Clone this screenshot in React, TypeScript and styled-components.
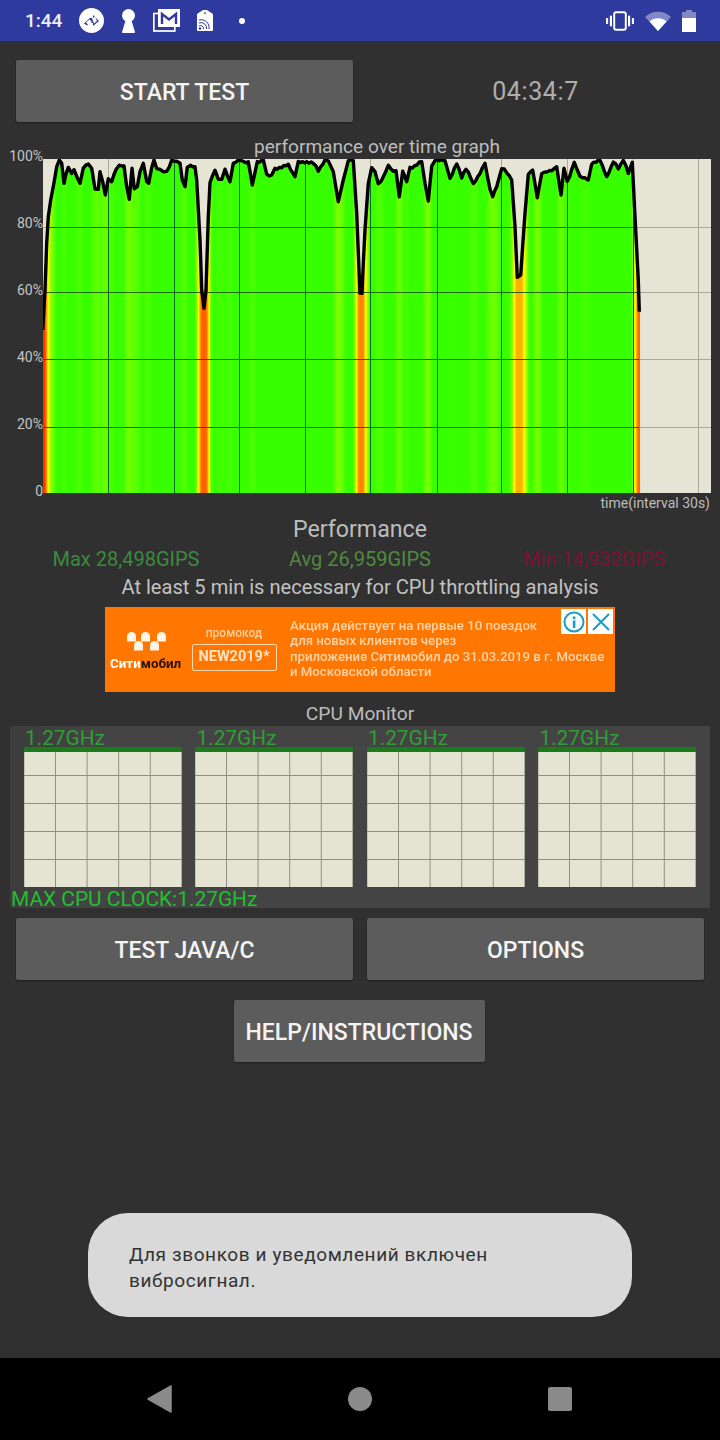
import React from "react";
import styled, { createGlobalStyle } from "styled-components";

const Global = createGlobalStyle`
  html, body { margin: 0; padding: 0; background: #303030; }
  body { font-family: Roboto, "Noto Sans", sans-serif; overflow: hidden; }
`;

const Page = styled.div`
  position: relative;
  width: 720px;
  height: 1440px;
  display: flex;
  flex-direction: column;
  background: #303030;
  overflow: hidden;
`;

const StatusBar = styled.header`
  flex: none;
  height: 41px;
  background: #2f3a9e;
  display: flex;
  align-items: center;
  padding: 0 24px 0 25px;
  color: #eceef8;
  box-sizing: border-box;
`;
const Clock = styled.span`
  font-size: 19px;
  font-weight: 500;
  width: 54px;
`;
const NoticeIcons = styled.div`
  display: flex;
  align-items: center;
  gap: 17px;
  flex: 1;
`;
const SystemIcons = styled.div`
  display: flex;
  align-items: center;
  gap: 11px;
`;

const Main = styled.main`
  flex: 1;
  display: flex;
  flex-direction: column;
  min-height: 0;
`;

const TopRow = styled.div`
  display: grid;
  grid-template-columns: 337px 337px;
  column-gap: 14px;
  padding: 19px 16px 0;
  align-items: center;
`;
const Button = styled.button<{ $wide?: boolean }>`
  height: 62px;
  width: ${(p) => (p.$wide ? "251px" : "337px")};
  border: 0;
  padding: 2px 0 0;
  border-radius: 2px;
  background: #5c5c5c;
  color: #f4f4f4;
  font: 500 23px Roboto, sans-serif;
  box-shadow: 0 1px 2px rgba(0, 0, 0, 0.4);
`;
const Timer = styled.div`
  text-align: center;
  font-size: 25px;
  color: #aeaeae;
  letter-spacing: 0.6px;
  padding-top: 1px;
`;

const GraphTitle = styled.div`
  margin-top: 12px;
  height: 25px;
  line-height: 25px;
  padding-left: 34px;
  text-align: center;
  font-size: 19.1px;
  color: #bdbdbd;
`;
const GraphRow = styled.div`
  display: flex;
  align-items: flex-start;
  height: 334px;
`;
const Axis = styled.div`
  width: 43px;
  height: 351px;
  margin-top: -11px;
  display: flex;
  flex-direction: column;
  justify-content: space-between;
  align-items: flex-end;
  font-size: 14px;
  line-height: 16px;
  color: #c4c4c4;
`;
const GraphSvg = styled.svg`
  display: block;
  width: 668px;
  height: 334px;
`;
const TimeCaption = styled.div`
  text-align: right;
  padding-right: 10px;
  font-size: 14px;
  line-height: 20px;
  color: #bcbcbc;
`;
const SectionTitle = styled.div`
  margin-top: 2px;
  text-align: center;
  font-size: 23.2px;
  line-height: 28px;
  color: #bcbcbc;
`;
const Stats = styled.div`
  display: grid;
  grid-template-columns: 234px 234px 234px;
  padding-left: 9px;
  height: 28px;
  margin-top: 2px;
  align-items: center;
`;
const Stat = styled.div<{ $color: string }>`
  text-align: center;
  font-size: 20px;
  color: ${(p) => p.$color};
`;
const Notice = styled.div`
  text-align: center;
  font-size: 20.1px;
  line-height: 28px;
  color: #c2c2c2;
`;

const Ad = styled.aside`
  position: relative;
  align-self: center;
  width: 510px;
  height: 85px;
  margin-top: 6px;
  background: #ff7600;
  display: flex;
  box-sizing: border-box;
  padding-left: 5px;
`;
const AdLogo = styled.div`
  width: 68px;
  display: flex;
  flex-direction: column;
  align-items: flex-start;
  padding-top: 25px;
  filter: blur(0.5px);
`;
const LogoText = styled.div`
  margin-top: 5px;
  font-size: 13.4px;
  font-weight: 700;
  color: #fff;
  white-space: nowrap;
  b { color: #2a1200; font-weight: 700; }
`;
const AdPromo = styled.div`
  width: 112px;
  display: flex;
  flex-direction: column;
  align-items: center;
  padding-top: 19px;
  filter: blur(0.5px);
`;
const PromoLabel = styled.div`
  font-size: 12px;
  font-weight: 500;
  line-height: 15px;
  color: #ffcf9c;
`;
const PromoCode = styled.div`
  margin-top: 3px;
  width: 85px;
  height: 27px;
  box-sizing: border-box;
  border: 1.5px solid #ffd9b0;
  border-radius: 2px;
  text-align: center;
  font-size: 14.5px;
  font-weight: 700;
  line-height: 24px;
  color: #ffe3c6;
`;
const AdText = styled.div`
  padding-top: 11px;
  font-size: 13.2px;
  font-weight: 500;
  line-height: 15.4px;
  color: #ffd3a6;
  white-space: nowrap;
  filter: blur(0.6px);
`;
const AdBadges = styled.div`
  position: absolute;
  top: 2px;
  right: 2px;
  display: flex;
  gap: 2px;
`;
const AdBadge = styled.div`
  width: 25px;
  height: 25px;
  background: #fdfdfd;
  display: flex;
  align-items: center;
  justify-content: center;
`;

const CpuTitle = styled.div`
  margin-top: 9px;
  height: 25px;
  line-height: 25px;
  text-align: center;
  font-size: 19.2px;
  color: #bcbcbc;
`;
const CpuPanel = styled.section`
  margin: 0 10px;
  height: 182px;
  box-sizing: border-box;
  padding-left: 14px;
  background: linear-gradient(90deg, #3c3c3c 0, #444 12%, #444 100%);
`;
const CpuGrid = styled.div`
  display: grid;
  grid-template-columns: repeat(4, 157.7px);
  column-gap: 13.8px;
`;
const CpuCell = styled.div`
  display: flex;
  flex-direction: column;
`;
const CpuFreq = styled.div`
  height: 21px;
  line-height: 24px;
  padding-left: 1px;
  font-size: 20.8px;
  color: #2f9e35;
  white-space: nowrap;
`;
const CpuBar = styled.div`
  height: 5px;
  background: #1a7a1c;
`;
const CpuGraph = styled.div`
  height: 135px;
  background-color: #e5e4d3;
  background-image:
    linear-gradient(90deg, #8f8f83 1px, transparent 1px),
    linear-gradient(180deg, #8f8f83 1px, transparent 1px);
  background-size: 31.6px 28px;
  background-position: 31px 23px;
`;
const MaxClock = styled.div`
  margin-left: -13px;
  height: 21px;
  line-height: 24px;
  font-size: 20.9px;
  color: #22bf2e;
`;

const ButtonRow = styled.div`
  display: grid;
  grid-template-columns: 337px 337px;
  column-gap: 14px;
  padding: 10px 16px 0;
`;
const HelpRow = styled.div`
  display: flex;
  justify-content: center;
  padding: 20px 2px 0 0;
`;

const Toast = styled.div`
  position: absolute;
  left: 88px;
  top: 1213px;
  width: 544px;
  height: 104px;
  box-sizing: border-box;
  padding: 29px 41px 0;
  border-radius: 40px;
  background: #d9d9d9;
  color: #333;
  font-size: 19px;
  line-height: 26px;
  letter-spacing: 0.6px;
`;

const NavBar = styled.nav`
  flex: none;
  height: 82px;
  background: #000;
  display: flex;
  align-items: center;
  justify-content: center;
  gap: 176px;
  padding-right: 3px;
`;

const L = [[128,600],[130,570],[135,480],[140,340],[145,260],[152,210],[160,170],[170,110],[178,90],[185,100],[192,160],[197,135],[205,115],[215,130],[222,122],[232,145],[240,160],[250,115],[265,100],[275,115],[285,178],[295,178],[300,125],[308,155],[316,195],[325,145],[335,155],[348,115],[358,107],[372,108],[380,170],[388,208],[396,115],[403,175],[412,170],[420,125],[430,100],[440,155],[446,160],[455,110],[462,90],[470,115],[480,118],[490,125],[500,125],[515,92],[530,95],[540,100],[547,150],[555,170],[562,110],[572,105],[585,110],[590,150],[600,330],[605,480],[612,535],[618,480],[625,260],[630,155],[645,120],[655,145],[665,150],[675,120],[690,155],[700,100],[715,90],[730,95],[745,95],[757,165],[772,95],[790,90],[800,135],[815,135],[825,115],[845,112],[865,105],[885,140],[895,95],[920,95],[940,100],[955,120],[975,92],[985,92],[1000,125],[1015,215],[1030,150],[1045,92],[1060,92],[1070,250],[1078,440]];
const R = [[0,490],[6,490],[10,400],[15,300],[25,160],[35,110],[45,125],[55,165],[70,140],[85,108],[100,122],[108,122],[118,200],[128,120],[140,155],[150,115],[185,95],[195,160],[205,213],[215,110],[225,92],[255,92],[270,145],[290,102],[305,140],[318,115],[340,160],[360,130],[375,100],[390,180],[398,198],[410,170],[425,115],[440,125],[455,150],[465,290],[472,445],[482,435],[495,250],[505,130],[518,120],[532,203],[545,130],[575,120],[590,110],[603,195],[612,115],[622,155],[643,97],[660,140],[685,150],[695,100],[720,92],[740,140],[760,95],[775,115],[790,90],[805,128],[817,97],[825,260],[835,450],[838,545]];

const W = 668;
const H = 334;
const rough: [number, number][] = [
  ...L.map(([x, y]) => [x / 3 - 43, y / 3 + 130 - 159] as [number, number]),
  ...R.map(([x, y]) => [x / 3 + 360 - 43, y / 3 + 130 - 159] as [number, number]),
];
const roughY = (x: number) => {
  for (let i = 1; i < rough.length; i++) {
    if (x <= rough[i][0]) {
      const [x0, y0] = rough[i - 1];
      const [x1, y1] = rough[i];
      return y0 + ((y1 - y0) * (x - x0)) / Math.max(x1 - x0, 0.001);
    }
  }
  return rough[rough.length - 1][1];
};
const curve: [number, number][] = [];
for (let i = 0; i < rough.length - 1; i++) {
  const [x0, y0] = rough[i];
  const [x1, y1] = rough[i + 1];
  const steps = Math.max(1, Math.floor((x1 - x0) / 2));
  for (let s = 0; s < steps; s++) {
    const x = x0 + ((x1 - x0) * s) / steps;
    const y = y0 + ((y1 - y0) * s) / steps;
    const n = Math.abs(y1 - y0) / Math.max(x1 - x0, 0.1) < 3 ? Math.sin(x * 2.3) * Math.cos(x * 0.9) * 1.3 : 0;
    curve.push([x, Math.max(0.5, y + n)]);
  }
}
curve.push(rough[rough.length - 1]);

const heatHue = (v: number) => {
  if (v <= 50) return 8;
  if (v <= 63) return 8 + ((v - 50) / 13) * 30;
  if (v <= 85) return 38 + ((v - 63) / 22) * 47;
  if (v <= 95) return 85 + ((v - 85) / 10) * 22;
  return 107;
};
const valueAt = (x: number) => 100 - (roughY(Math.max(0.2, Math.min(596, x))) / H) * 100;
const minValue = (x: number) => Math.min(valueAt(x - 1.5), valueAt(x), valueAt(x + 1.5));
const columns = Array.from({ length: 597 }, (_, x) => {
  const px = x + 0.5;
  const v = (minValue(px - 1) + minValue(px) + minValue(px + 1)) / 3;
  return { x, y: roughY(px), hue: heatHue(v) };
});
const vLines = [65, 131, 196, 262, 327, 394, 458, 524, 590, 655];
const hLines = [68, 133, 200, 268];
const linePath = "M" + curve.map(([x, y]) => `${x.toFixed(1)} ${y.toFixed(1)}`).join("L");
const areaPath = `${linePath}L${curve[curve.length - 1][0]} ${H}L0 ${H}Z`;

const PerfGraph = () => (
  <GraphSvg viewBox={`0 0 ${W} ${H}`}>
    <defs>
      <clipPath id="underCurve">
        <path d={areaPath} />
      </clipPath>
    </defs>
    <rect width={W} height={H} fill="#e5e4d5" />
    {vLines.map((x) => (
      <rect key={x} x={x} y={0} width={1} height={H} fill="#a9a998" />
    ))}
    {hLines.map((y) => (
      <rect key={y} x={0} y={y} width={W} height={1} fill="#a9a998" />
    ))}
    {columns.map((c) => (
      <rect key={c.x} x={c.x} y={c.y} width={1.05} height={H - c.y} fill={`hsl(${c.hue},100%,50%)`} />
    ))}
    <g clipPath="url(#underCurve)">
      {vLines.map((x) => (
        <rect key={x} x={x} y={0} width={1} height={H} fill="rgb(0,110,35)" />
      ))}
      {hLines.map((y) => (
        <rect key={y} x={0} y={y} width={W} height={1} fill="rgb(30,105,10)" />
      ))}
    </g>
    <path d={linePath} fill="none" stroke="#000" strokeWidth={3.4} strokeLinejoin="round" />
  </GraphSvg>
);

const TagIcon = () => (
  <svg width="25" height="25" viewBox="0 0 25 25">
    <circle cx="12.5" cy="12.5" r="12.5" fill="#fff" />
    <path d="M5 15.5 L11 10 L14 10 L14 7 L20 13 L14 18 L14 15 L10 15 L8 17.5 Z" fill="#2f3a9e" />
    <path d="M7 14.5 L10.5 11.5 L13 14 L9.5 17 Z M13 10.5 L16 8.7 L18 13 L15 15.5 Z" fill="#fff" />
  </svg>
);
const KeyholeIcon = () => (
  <svg width="15" height="24" viewBox="0 0 15 24">
    <circle cx="7.5" cy="6.5" r="6.5" fill="#fff" />
    <path d="M5 10 H10 L14 23 Q14 24 13 24 H2 Q1 24 1 23 Z" fill="#fff" />
  </svg>
);
const MailIcon = () => (
  <svg width="27" height="23" viewBox="0 0 27 23">
    <rect x="0.8" y="4.5" width="21" height="17.5" fill="none" stroke="#fff" strokeWidth="1.7" />
    <rect x="5" y="0" width="22" height="18" fill="#fff" />
    <path d="M9 15 V5 L16 10.5 L23 5 V15" fill="none" stroke="#2f3a9e" strokeWidth="2.4" />
  </svg>
);
const SimIcon = () => (
  <svg width="16" height="21" viewBox="0 0 16 21">
    <path d="M0 4 L6 0 H10 L16 4 V20 Q16 21 15 21 H1 Q0 21 0 20 Z" fill="#fff" />
    <g fill="none" stroke="#2f3a9e" strokeWidth="1">
      <path d="M2 10 A8 8 0 0 1 12 19" />
      <path d="M2 13 A5.5 5.5 0 0 1 9.5 19" />
      <path d="M2 16 A3 3 0 0 1 6.5 19" />
    </g>
    <circle cx="3" cy="18.5" r="1.2" fill="#2f3a9e" />
    <circle cx="8" cy="3.2" r="0.9" fill="#2f3a9e" />
  </svg>
);
const DotIcon = () => (
  <svg width="6" height="6" viewBox="0 0 6 6" style={{ marginLeft: 9 }}>
    <circle cx="3" cy="3" r="3" fill="#fff" />
  </svg>
);
const VibrateIcon = () => (
  <svg width="28" height="20" viewBox="0 0 29 20">
    <rect x="8.5" y="1" width="12" height="18" rx="2" fill="none" stroke="#fff" strokeWidth="2" />
    <rect x="4" y="4.5" width="2.2" height="11" fill="#fff" />
    <rect x="22.8" y="4.5" width="2.2" height="11" fill="#fff" />
    <rect x="0" y="7" width="2.2" height="6" fill="#fff" />
    <rect x="26.8" y="7" width="2.2" height="6" fill="#fff" />
  </svg>
);
const WifiIcon = () => (
  <svg width="26" height="20" viewBox="0 0 26 20">
    <path d="M0 6 A19 19 0 0 1 26 6 L13 20 Z" fill="#fff" opacity="0.4" />
    <path d="M4.5 10.5 A13 13 0 0 1 21.5 10.5 L13 20 Z" fill="#fff" />
  </svg>
);
const BatteryIcon = () => (
  <svg width="14" height="22" viewBox="0 0 14 22">
    <path d="M4 0 H10 V2 H14 V22 H0 V2 H4 Z" fill="#fff" opacity="0.4" />
    <rect x="0" y="8" width="14" height="14" fill="#fff" />
  </svg>
);
const TaxiLogo = () => (
  <svg width="39" height="19" viewBox="0 0 39 19" style={{ marginLeft: 17 }}>
    {[[0, 0], [14, 0], [30, 0], [7, 9], [23, 9]].map(([x, y]) => (
      <path key={`${x}-${y}`} d={`M${x} ${y + 4.5} A4.5 4.5 0 0 1 ${x + 9} ${y + 4.5} V${y + 9.5} H${x} Z`} fill="#fff4e6" />
    ))}
  </svg>
);
const InfoIcon = () => (
  <svg width="22" height="22" viewBox="0 0 22 22">
    <circle cx="11" cy="11" r="9.5" fill="none" stroke="#1a9cc4" strokeWidth="2" />
    <rect x="9.8" y="9.5" width="2.6" height="7.5" fill="#1a9cc4" />
    <rect x="9.8" y="5.5" width="2.6" height="2.6" fill="#1a9cc4" />
  </svg>
);
const CloseIcon = () => (
  <svg width="20" height="20" viewBox="0 0 20 20">
    <path d="M2 2 L18 18 M18 2 L2 18" stroke="#1a9cc4" strokeWidth="2" />
  </svg>
);

const NavBack = () => (
  <svg width="26" height="28" viewBox="0 0 26 28">
    <path d="M25 1 V27 L2 14 Z" fill="#8a8a8a" stroke="#8a8a8a" strokeWidth="1.5" strokeLinejoin="round" />
  </svg>
);
const NavHome = () => (
  <svg width="24" height="24" viewBox="0 0 24 24">
    <circle cx="12" cy="12" r="12" fill="#8a8a8a" />
  </svg>
);
const NavRecent = () => (
  <svg width="24" height="24" viewBox="0 0 24 24">
    <rect width="24" height="24" rx="2" fill="#8a8a8a" />
  </svg>
);

export default function App() {
  return (
    <Page>
      <Global />
      <StatusBar>
        <Clock>1:44</Clock>
        <NoticeIcons>
          <TagIcon />
          <KeyholeIcon />
          <MailIcon />
          <SimIcon />
          <DotIcon />
        </NoticeIcons>
        <SystemIcons>
          <VibrateIcon />
          <WifiIcon />
          <BatteryIcon />
        </SystemIcons>
      </StatusBar>
      <Main>
        <TopRow>
          <Button>START TEST</Button>
          <Timer>04:34:7</Timer>
        </TopRow>
        <GraphTitle>performance over time graph</GraphTitle>
        <GraphRow>
          <Axis>
            <span>100%</span>
            <span>80%</span>
            <span>60%</span>
            <span>40%</span>
            <span>20%</span>
            <span>0</span>
          </Axis>
          <PerfGraph />
        </GraphRow>
        <TimeCaption>time(interval 30s)</TimeCaption>
        <SectionTitle>Performance</SectionTitle>
        <Stats>
          <Stat $color="#3b8a3f">Max 28,498GIPS</Stat>
          <Stat $color="#4f8a3f">Avg 26,959GIPS</Stat>
          <Stat $color="#7a1233">Min 14,932GIPS</Stat>
        </Stats>
        <Notice>At least 5 min is necessary for CPU throttling analysis</Notice>
        <Ad>
          <AdLogo>
            <TaxiLogo />
            <LogoText>
              Сити<b>мобил</b>
            </LogoText>
          </AdLogo>
          <AdPromo>
            <PromoLabel>промокод</PromoLabel>
            <PromoCode>NEW2019*</PromoCode>
          </AdPromo>
          <AdText>
            Акция действует на первые 10 поездок
            <br />
            для новых клиентов через
            <br />
            приложение Ситимобил до 31.03.2019 в г. Москве
            <br />
            и Московской области
          </AdText>
          <AdBadges>
            <AdBadge>
              <InfoIcon />
            </AdBadge>
            <AdBadge>
              <CloseIcon />
            </AdBadge>
          </AdBadges>
        </Ad>
        <CpuTitle>CPU Monitor</CpuTitle>
        <CpuPanel>
          <CpuGrid>
            {[0, 1, 2, 3].map((i) => (
              <CpuCell key={i}>
                <CpuFreq>1.27GHz</CpuFreq>
                <CpuBar />
                <CpuGraph />
              </CpuCell>
            ))}
          </CpuGrid>
          <MaxClock>MAX CPU CLOCK:1.27GHz</MaxClock>
        </CpuPanel>
        <ButtonRow>
          <Button>TEST JAVA/C</Button>
          <Button>OPTIONS</Button>
        </ButtonRow>
        <HelpRow>
          <Button $wide>HELP/INSTRUCTIONS</Button>
        </HelpRow>
      </Main>
      <Toast>
        Для звонков и уведомлений включен
        <br />
        вибросигнал.
      </Toast>
      <NavBar>
        <NavBack />
        <NavHome />
        <NavRecent />
      </NavBar>
    </Page>
  );
}
